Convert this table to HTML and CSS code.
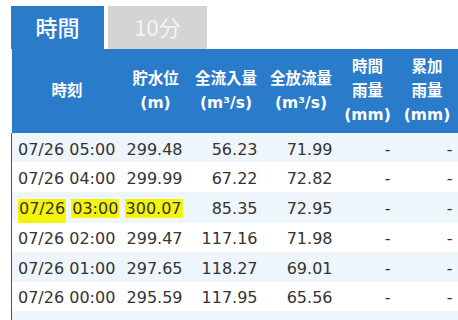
FILE: index.html
```html
<!DOCTYPE html>
<html lang="ja">
<head>
<meta charset="utf-8">
<link rel="stylesheet" href="styles.css">
</head>
<body>
<div class="wrap">
  <div class="tabs">
    <div class="tab active">時間</div>
    <div class="tab">10分</div>
  </div>
  <table class="data">
    <colgroup>
      <col class="c1"><col class="c2"><col class="c3"><col class="c4"><col class="c5"><col class="c6">
    </colgroup>
    <thead>
      <tr>
        <th>時刻</th>
        <th>貯水位<br>(m)</th>
        <th>全流入量<br>(m³/s)</th>
        <th>全放流量<br>(m³/s)</th>
        <th>時間<br>雨量<br>(mm)</th>
        <th>累加<br>雨量<br>(mm)</th>
      </tr>
    </thead>
    <tbody>
      <tr><td class="time">07/26 05:00</td><td>299.48</td><td>56.23</td><td>71.99</td><td>-</td><td>-</td></tr>
      <tr><td class="time">07/26 04:00</td><td>299.99</td><td>67.22</td><td>72.82</td><td>-</td><td>-</td></tr>
      <tr><td class="time"><span class="hl hl-a">07/26</span> <span class="hl hl-b">03:00</span></td><td><span class="hl hl-c">300.07</span></td><td>85.35</td><td>72.95</td><td>-</td><td>-</td></tr>
      <tr><td class="time">07/26 02:00</td><td>299.47</td><td>117.16</td><td>71.98</td><td>-</td><td>-</td></tr>
      <tr><td class="time">07/26 01:00</td><td>297.65</td><td>118.27</td><td>69.01</td><td>-</td><td>-</td></tr>
      <tr><td class="time">07/26 00:00</td><td>295.59</td><td>117.95</td><td>65.56</td><td>-</td><td>-</td></tr>
      <tr><td class="time">&nbsp;</td><td></td><td></td><td></td><td></td><td></td></tr>
    </tbody>
  </table>
</div>
</body>
</html>
```
FILE: styles.css
```css
html, body {
  margin: 0;
  padding: 0;
  background: #ffffff;
}
body {
  width: 458px;
  height: 320px;
  overflow: hidden;
  font-family: "DejaVu Sans", "Noto Sans CJK JP", sans-serif;
  color: #333333;
}
.wrap {
  padding: 6px 0 0 11px;
}
.tabs {
  display: flex;
  gap: 4px;
  height: 43px;
}
.tab {
  width: 99px;
  height: 43px;
  background: #d4d4d4;
  color: #f4f4f4;
  font-family: "Noto Sans CJK JP", sans-serif;
  font-size: 22px;
  line-height: 41px;
  text-align: center;
}
.tab.active {
  width: 93px;
  background: #2a7bca;
  color: #ffffff;
  font-weight: 500;
}
.data {
  border-collapse: collapse;
  table-layout: fixed;
  width: 447px;
}
.c1 { width: 111px; }
.c2 { width: 66px; }
.c3 { width: 75px; }
.c4 { width: 75px; }
.c5 { width: 58px; }
.c6 { width: 62px; }
.data thead th {
  background: #2a7bca;
  color: #ffffff;
  font-family: "DejaVu Sans", "Noto Sans CJK JP", sans-serif;
  font-weight: bold;
  font-size: 15.5px;
  line-height: 24px;
  height: 84px;
  padding: 0;
  text-align: center;
  vertical-align: middle;
  white-space: nowrap;
}
.data thead th:last-child {
  border-right: 2px solid #eaf2fa;
}
.data tbody tr {
  height: 29.4px;
}
.data tbody td {
  padding: 3px 6px 0 0;
  font-size: 16px;
  line-height: 19px;
  text-align: right;
  vertical-align: middle;
  white-space: nowrap;
}
.data tbody tr:nth-child(odd) {
  background: #eef5fb;
}
.data tbody td.time {
  text-align: left;
  padding: 3px 0 0 6px;
  border-left: 1px solid #555555;
}
.hl {
  background: #f3f30c;
  display: inline-block;
  line-height: 19px;
  padding: 0 1px;
}
.hl-a {
  padding-bottom: 5px;
  margin-top: 4px;
}
```
